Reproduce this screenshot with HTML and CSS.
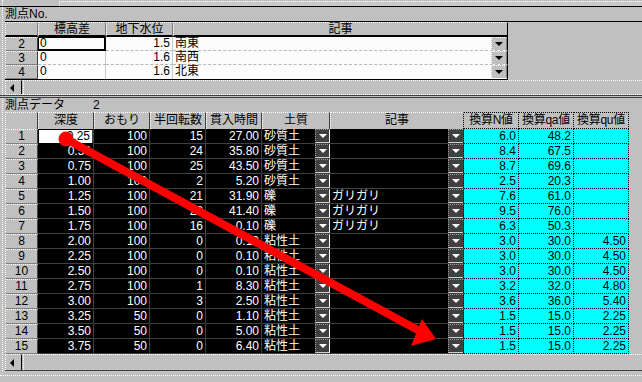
FILE: index.html
```html
<!DOCTYPE html>
<html lang="ja">
<head>
<meta charset="utf-8">
<title>測点</title>
<link rel="stylesheet" href="styles.css">
</head>
<body>
<div class="topstrip"><div class="ts-left"></div><div class="ts-box"></div></div>

<section class="panel p1">
  <div class="label">測点No.</div>
  <div class="g1wrap">
    <div class="g1">
      <div class="h corner"></div><div class="h">標高差</div><div class="h">地下水位</div><div class="h last">記事</div>

      <div class="rh">2</div><div class="w focus">0</div><div class="w num">1.5</div><div class="w note"><span>南東</span><i class="dd1"></i></div>
      <div class="rh">3</div><div class="w">0</div><div class="w num">1.6</div><div class="w note"><span>南西</span><i class="dd1"></i></div>
      <div class="rh">4</div><div class="w nb">0</div><div class="w num nb">1.6</div><div class="w note nb"><span>北東</span><i class="dd1"></i></div>
    </div>
  </div>
  <div class="hscroll"><div class="sbtn"><i class="larr"></i></div><div class="track"></div></div>
</section>
<div class="pend"></div>

<section class="panel p2">
  <div class="label">測点データ<span class="cnt">2</span></div>
  <div class="g2">
    <div class="h2 corner"></div><div class="h2">深度</div><div class="h2">おもり</div><div class="h2">半回転数</div><div class="h2">貫入時間</div><div class="h2">土質</div><div class="h2 hnote">記事</div><div class="h2 hc">換算N値</div><div class="h2 hc">換算qa値</div><div class="h2 hc">換算qu値</div>

    <div class="rh2">1</div><div class="c edit">0.25</div><div class="c">100</div><div class="c">15</div><div class="c">27.00</div><div class="c soil"><span>砂質土</span><i class="dd"></i></div><div class="c note2"><span></span><i class="dd"></i></div><div class="cy">6.0</div><div class="cy">48.2</div><div class="cy"></div>
    <div class="rh2">2</div><div class="c">0.50</div><div class="c">100</div><div class="c">24</div><div class="c">35.80</div><div class="c soil"><span>砂質土</span><i class="dd"></i></div><div class="c note2"><span></span><i class="dd"></i></div><div class="cy">8.4</div><div class="cy">67.5</div><div class="cy"></div>
    <div class="rh2">3</div><div class="c">0.75</div><div class="c">100</div><div class="c">25</div><div class="c">43.50</div><div class="c soil"><span>砂質土</span><i class="dd"></i></div><div class="c note2"><span></span><i class="dd"></i></div><div class="cy">8.7</div><div class="cy">69.6</div><div class="cy"></div>
    <div class="rh2">4</div><div class="c">1.00</div><div class="c">100</div><div class="c">2</div><div class="c">5.20</div><div class="c soil"><span>砂質土</span><i class="dd"></i></div><div class="c note2"><span></span><i class="dd"></i></div><div class="cy">2.5</div><div class="cy">20.3</div><div class="cy"></div>
    <div class="rh2">5</div><div class="c">1.25</div><div class="c">100</div><div class="c">21</div><div class="c">31.90</div><div class="c soil"><span>礫</span><i class="dd"></i></div><div class="c note2"><span>ガリガリ</span><i class="dd"></i></div><div class="cy">7.6</div><div class="cy">61.0</div><div class="cy"></div>
    <div class="rh2">6</div><div class="c">1.50</div><div class="c">100</div><div class="c">23</div><div class="c">41.40</div><div class="c soil"><span>礫</span><i class="dd"></i></div><div class="c note2"><span>ガリガリ</span><i class="dd"></i></div><div class="cy">9.5</div><div class="cy">76.0</div><div class="cy"></div>
    <div class="rh2">7</div><div class="c">1.75</div><div class="c">100</div><div class="c">16</div><div class="c">0.10</div><div class="c soil"><span>礫</span><i class="dd"></i></div><div class="c note2"><span>ガリガリ</span><i class="dd"></i></div><div class="cy">6.3</div><div class="cy">50.3</div><div class="cy"></div>
    <div class="rh2">8</div><div class="c">2.00</div><div class="c">100</div><div class="c">0</div><div class="c">0.10</div><div class="c soil"><span>粘性土</span><i class="dd"></i></div><div class="c note2"><span></span><i class="dd"></i></div><div class="cy">3.0</div><div class="cy">30.0</div><div class="cy">4.50</div>
    <div class="rh2">9</div><div class="c">2.25</div><div class="c">100</div><div class="c">0</div><div class="c">0.10</div><div class="c soil"><span>粘性土</span><i class="dd"></i></div><div class="c note2"><span></span><i class="dd"></i></div><div class="cy">3.0</div><div class="cy">30.0</div><div class="cy">4.50</div>
    <div class="rh2">10</div><div class="c">2.50</div><div class="c">100</div><div class="c">0</div><div class="c">0.10</div><div class="c soil"><span>粘性土</span><i class="dd"></i></div><div class="c note2"><span></span><i class="dd"></i></div><div class="cy">3.0</div><div class="cy">30.0</div><div class="cy">4.50</div>
    <div class="rh2">11</div><div class="c">2.75</div><div class="c">100</div><div class="c">1</div><div class="c">8.30</div><div class="c soil"><span>粘性土</span><i class="dd"></i></div><div class="c note2"><span></span><i class="dd"></i></div><div class="cy">3.2</div><div class="cy">32.0</div><div class="cy">4.80</div>
    <div class="rh2">12</div><div class="c">3.00</div><div class="c">100</div><div class="c">3</div><div class="c">2.50</div><div class="c soil"><span>粘性土</span><i class="dd"></i></div><div class="c note2"><span></span><i class="dd"></i></div><div class="cy">3.6</div><div class="cy">36.0</div><div class="cy">5.40</div>
    <div class="rh2">13</div><div class="c">3.25</div><div class="c">50</div><div class="c">0</div><div class="c">1.10</div><div class="c soil"><span>粘性土</span><i class="dd"></i></div><div class="c note2"><span></span><i class="dd"></i></div><div class="cy">1.5</div><div class="cy">15.0</div><div class="cy">2.25</div>
    <div class="rh2">14</div><div class="c">3.50</div><div class="c">50</div><div class="c">0</div><div class="c">5.00</div><div class="c soil"><span>粘性土</span><i class="dd"></i></div><div class="c note2"><span></span><i class="dd"></i></div><div class="cy">1.5</div><div class="cy">15.0</div><div class="cy">2.25</div>
    <div class="rh2">15</div><div class="c">3.75</div><div class="c">50</div><div class="c">0</div><div class="c">6.40</div><div class="c soil"><span>粘性土</span><i class="dd"></i></div><div class="c note2"><span></span><i class="dd"></i></div><div class="cy">1.5</div><div class="cy">15.0</div><div class="cy">2.25</div>
  </div>
  <div class="hscroll hs2"><div class="sbtn"><i class="larr"></i></div><div class="track"></div></div>
</section>
<div class="pend2"></div>

<svg class="arrow" width="642" height="382" viewBox="0 0 642 382" aria-hidden="true">
  <line x1="66" y1="139" x2="427" y2="335" stroke="#ff0000" stroke-width="8"/>
  <circle cx="66" cy="139" r="7.5" fill="#ff0000"/>
  <polygon points="436,339 411,346 422,319" fill="#ff0000"/>
</svg>
</body>
</html>
```

FILE: styles.css
```css
* { box-sizing: border-box; }
html, body { margin: 0; padding: 0; }
body {
  width: 642px;
  height: 382px;
  overflow: hidden;
  position: relative;
  background: #c0c0c0;
  font-family: "Liberation Sans", "Noto Sans CJK JP", sans-serif;
  font-size: 12px;
  color: #000;
}

/* top remnant of previous pane */
.topstrip {
  height: 7px;
  display: flex;
  border-bottom: 1px solid #000;
}
.ts-left {
  width: 57px;
  margin-left: 2px;
  border-left: 1px dotted #fff;
}
.ts-box {
  flex: 1;
  border-top: 1px dotted #fff;
  border-left: 1px dotted #fff;
  margin-top: 1px;
  background: #c8c8c8;
}

.panel {
  margin-left: 2px;
  border-left: 1px dotted #fff;
  padding-left: 2px;
}

.label {
  height: 14px;
  line-height: 14px;
  white-space: nowrap;
  font-size: 12px;
}
.p1 .label { border-bottom: 1px solid #000; height: 15px; }
.cnt { margin-left: 28px; }

/* ---------- grid 1 ---------- */
.g1wrap { border-bottom: 1px solid #000; width: 503px; }
.g1 {
  display: grid;
  grid-template-columns: 33px 68px 67px 335px;
  grid-auto-rows: 14px;
  grid-template-rows: 15px;
}
.h {
  background: #c0c0c0;
  border-top: 1px dotted #fff;
  border-left: 1px dotted #fff;
  border-right: 1px solid #808080;
  border-bottom: 2px solid #000;
  text-align: center;
  line-height: 12px;
  white-space: nowrap;
}
.h.last { border-right: 1px solid #000; }
.rh {
  background: #c0c0c0;
  border-top: 1px dotted #fff;
  border-left: 1px dotted #fff;
  border-bottom: 1px solid #808080;
  border-right: 1px solid #404040;
  text-align: center;
  line-height: 12px;
}
.w {
  background: #fcfcfc;
  border-right: 1px solid #c8c8c8;
  border-bottom: 1px dashed #b8b8b8;
  padding: 0 2px;
  line-height: 13px;
  white-space: nowrap;
}
.w.nb { border-bottom: none; }
.w.num { text-align: right; }
.w.focus {
  border-top: 1px solid #000;
  border-left: 1px solid #000;
  border-right: 2px solid #000;
  border-bottom: 2px solid #000;
  line-height: 11px;
  padding-left: 1px;
}
.w.note {
  display: flex;
  justify-content: space-between;
  padding-right: 0;
  border-right: 1px solid #000;
}
.dd1 {
  width: 16px;
  height: 13px;
  background: #c0c0c0;
  border-top: 1px dotted #fff;
  border-left: 1px dotted #fff;
  border-right: 1px solid #808080;
  display: flex;
  align-items: center;
  justify-content: center;
}
.dd1::after {
  content: "";
  border-left: 4px solid transparent;
  border-right: 4px solid transparent;
  border-top: 4px solid #000;
}

/* ---------- scrollbars ---------- */
.hscroll {
  height: 15px;
  display: flex;
  border-bottom: 1px dotted #fff;
}
.sbtn {
  width: 17px;
  border-top: 1px dotted #fff;
  border-left: 1px dotted #fff;
  border-right: 1px solid #000;
  display: flex;
  align-items: center;
  justify-content: center;
}
.larr {
  width: 0;
  height: 0;
  border-top: 4px solid transparent;
  border-bottom: 4px solid transparent;
  border-right: 4px solid #000;
  margin-right: 3px;
}
.track {
  flex: 1;
  border-top: 1px dotted #fff;
  border-left: 1px dotted #fff;
  margin-left: 1px;
}
.hs2 {
  height: 17px;
  border-bottom: 1px solid #404040;
}

.pend {
  height: 3px;
  border-top: 1px solid #404040;
  border-bottom: 1px solid #404040;
}
.pend2 {
  margin-top: 4px;
  border-top: 1px dotted #fff;
  height: 1px;
}

/* ---------- grid 2 ---------- */
.g2 {
  display: grid;
  grid-template-columns: 33px 56px 56px 56px 56px 68px 134px 55px 55px 55px;
  grid-template-rows: 17px;
  grid-auto-rows: 15px;
  width: 624px;
}
.h2 {
  background: #c0c0c0;
  border-top: 1px dotted #fff;
  border-left: 1px dotted #fff;
  border-right: 1px solid #404040;
  text-align: center;
  line-height: 15px;
  white-space: nowrap;
}
.h2.hnote { border-right: 1px dotted #000; }
.h2.hc {
  border-top: 1px dotted #000;
  border-left: none;
  border-right: 1px dotted #000;
  border-bottom: 1px dotted #000;
  line-height: 14px;
  letter-spacing: -0.3px;
}
.rh2 {
  background: #c0c0c0;
  border-top: 1px dotted #fff;
  border-left: 1px dotted #fff;
  border-bottom: 1px solid #808080;
  border-right: 1px solid #404040;
  text-align: center;
  line-height: 13px;
}
.c {
  background: #000;
  color: #fff;
  border-right: 1px solid #404040;
  border-bottom: 1px solid #404040;
  text-align: right;
  padding-right: 2px;
  line-height: 14px;
  white-space: nowrap;
}
.c.edit {
  background: #fff;
  color: #000;
  border: 1px solid #000;
  border-right: 2px solid #404040;
  line-height: 12px;
}
.c.soil, .c.note2 {
  display: flex;
  justify-content: space-between;
  text-align: left;
  padding: 0 0 0 2px;
}
.c.soil { border-right: none; }
.c.note2 { border-right: 1px dotted #d00000; }
.dd {
  width: 15px;
  height: 14px;
  background: #404040;
  border-top: 1px dotted #9a9a9a;
  border-left: 1px dotted #9a9a9a;
  border-right: 1px solid #fff;
  border-bottom: 1px solid #d0d0d0;
  display: flex;
  align-items: center;
  justify-content: center;
  flex: none;
}
.c.note2 .dd { border-right: none; width: 15px; }
.dd::after {
  content: "";
  border-left: 4px solid transparent;
  border-right: 4px solid transparent;
  border-top: 4px solid #fff;
}
.cy {
  background: #00ffff;
  color: #000;
  border-right: 1px dotted #000;
  border-bottom: 1px dotted #000;
  text-align: right;
  padding-right: 2px;
  line-height: 14px;
}

.arrow {
  position: absolute;
  left: 0;
  top: 0;
  pointer-events: none;
}
```
